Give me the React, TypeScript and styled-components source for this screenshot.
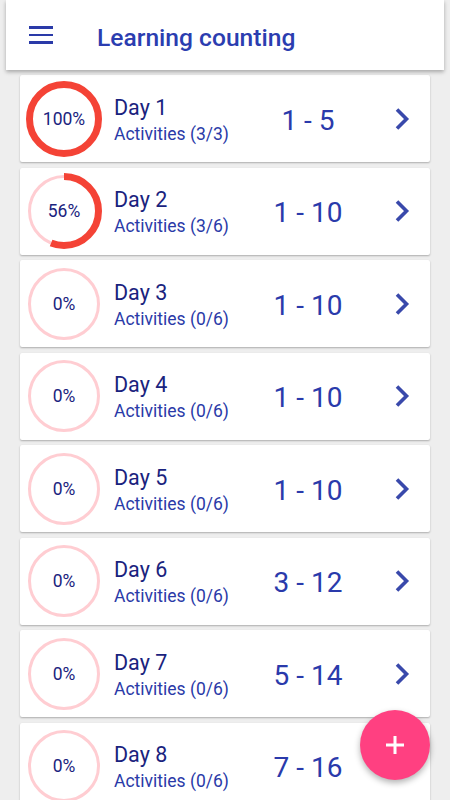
import * as React from "react";
import styled, { createGlobalStyle } from "styled-components";

const GlobalStyle = createGlobalStyle`
  html, body {
    margin: 0;
    padding: 0;
    background: #eeeeee;
    font-family: Roboto, "Liberation Sans", sans-serif;
  }
`;

const Page = styled.div`
  width: 450px;
  height: 800px;
  overflow: hidden;
  position: relative;
  background: #eeeeee;
`;

const Header = styled.header`
  margin: 0 6px;
  height: 70px;
  background: white;
  display: flex;
  align-items: center;
  box-shadow: 0 2px 4px rgba(0, 0, 0, 0.3);
  position: relative;
  z-index: 1;
`;

const MenuButton = styled.div`
  width: 24px;
  margin-left: 23px;
  display: flex;
  flex-direction: column;
  gap: 5px;
  & span {
    display: block;
    height: 2.5px;
    background: #2a3aa8;
  }
`;

const Title = styled.h1`
  margin: 0 0 0 44px;
  font-size: 24.6px;
  font-weight: 500;
  color: #2b3db0;
  padding-top: 4px;
`;

const List = styled.div`
  padding: 5px 20px 0;
  display: flex;
  flex-direction: column;
  gap: 5.57px;
`;

const Card = styled.div`
  height: 87px;
  background: white;
  border-radius: 2px;
  box-shadow: 0 1px 2px rgba(0, 0, 0, 0.28);
  display: flex;
  align-items: center;
  padding-left: 6px;
`;

const Ring = styled.div`
  width: 76px;
  height: 76px;
  position: relative;
  flex-shrink: 0;
  display: flex;
  align-items: center;
  justify-content: center;
  & svg {
    position: absolute;
    inset: 0;
  }
`;

const Percent = styled.span`
  position: relative;
  font-size: 17.5px;
  color: #1a237e;
`;

const Info = styled.div`
  margin-left: 12px;
  width: 140px;
  display: flex;
  flex-direction: column;
  padding-top: 2px;
`;

const DayName = styled.div`
  font-size: 21.5px;
  color: #1a237e;
  line-height: 28px;
`;

const Activities = styled.div`
  font-size: 17.5px;
  color: #2a3aa8;
  line-height: 24px;
`;

const Range = styled.div`
  width: 108px;
  text-align: center;
  font-size: 28px;
  color: #2a3aab;
  padding-top: 3px;
`;

const Chevron = styled.div`
  margin-left: 32px;
  display: flex;
  align-items: center;
`;

const Fab = styled.button`
  position: absolute;
  right: 20px;
  bottom: 20px;
  width: 70px;
  height: 70px;
  border-radius: 50%;
  border: none;
  background: #ff4081;
  box-shadow: 0 3px 6px rgba(0, 0, 0, 0.3);
  display: flex;
  align-items: center;
  justify-content: center;
  padding: 0;
`;

const days = [
  { day: 1, done: 3, total: 3, pct: 100, range: "1 - 5" },
  { day: 2, done: 3, total: 6, pct: 56, range: "1 - 10" },
  { day: 3, done: 0, total: 6, pct: 0, range: "1 - 10" },
  { day: 4, done: 0, total: 6, pct: 0, range: "1 - 10" },
  { day: 5, done: 0, total: 6, pct: 0, range: "1 - 10" },
  { day: 6, done: 0, total: 6, pct: 0, range: "3 - 12" },
  { day: 7, done: 0, total: 6, pct: 0, range: "5 - 14" },
  { day: 8, done: 0, total: 6, pct: 0, range: "7 - 16" },
];

const ProgressRing: React.FC<{ pct: number }> = ({ pct }) => {
  const r = 34.5;
  const c = 2 * Math.PI * r;
  return (
    <Ring>
      <svg width="76" height="76" viewBox="0 0 76 76">
        {pct < 100 && (
          <circle cx="38" cy="38" r="34.5" fill="none" stroke="#ffcdd2" strokeWidth="3" />
        )}
        {pct > 0 && (
          <circle
            cx="38"
            cy="38"
            r={r}
            fill="none"
            stroke="#f44336"
            strokeWidth="7"
            strokeDasharray={`${(c * pct) / 100} ${c}`}
            transform="rotate(-90 38 38)"
          />
        )}
      </svg>
      <Percent>{pct}%</Percent>
    </Ring>
  );
};

const App: React.FC = () => {
  return (
    <Page>
      <GlobalStyle />
      <Header>
        <MenuButton>
          <span />
          <span />
          <span />
        </MenuButton>
        <Title>Learning counting</Title>
      </Header>
      <List>
        {days.map(d => (
          <Card key={d.day}>
            <ProgressRing pct={d.pct} />
            <Info>
              <DayName>Day {d.day}</DayName>
              <Activities>
                Activities ({d.done}/{d.total})
              </Activities>
            </Info>
            <Range>{d.range}</Range>
            <Chevron>
              <svg width="16" height="24" viewBox="0 0 16 24">
                <path d="M3 2.5 L12.5 12 L3 21.5" fill="none" stroke="#3949ab" strokeWidth="3.6" />
              </svg>
            </Chevron>
          </Card>
        ))}
      </List>
      <Fab>
        <svg width="22" height="22" viewBox="0 0 22 22">
          <path d="M11 2 V20 M2 11 H20" stroke="white" strokeWidth="3" />
        </svg>
      </Fab>
    </Page>
  );
};

export default App;
